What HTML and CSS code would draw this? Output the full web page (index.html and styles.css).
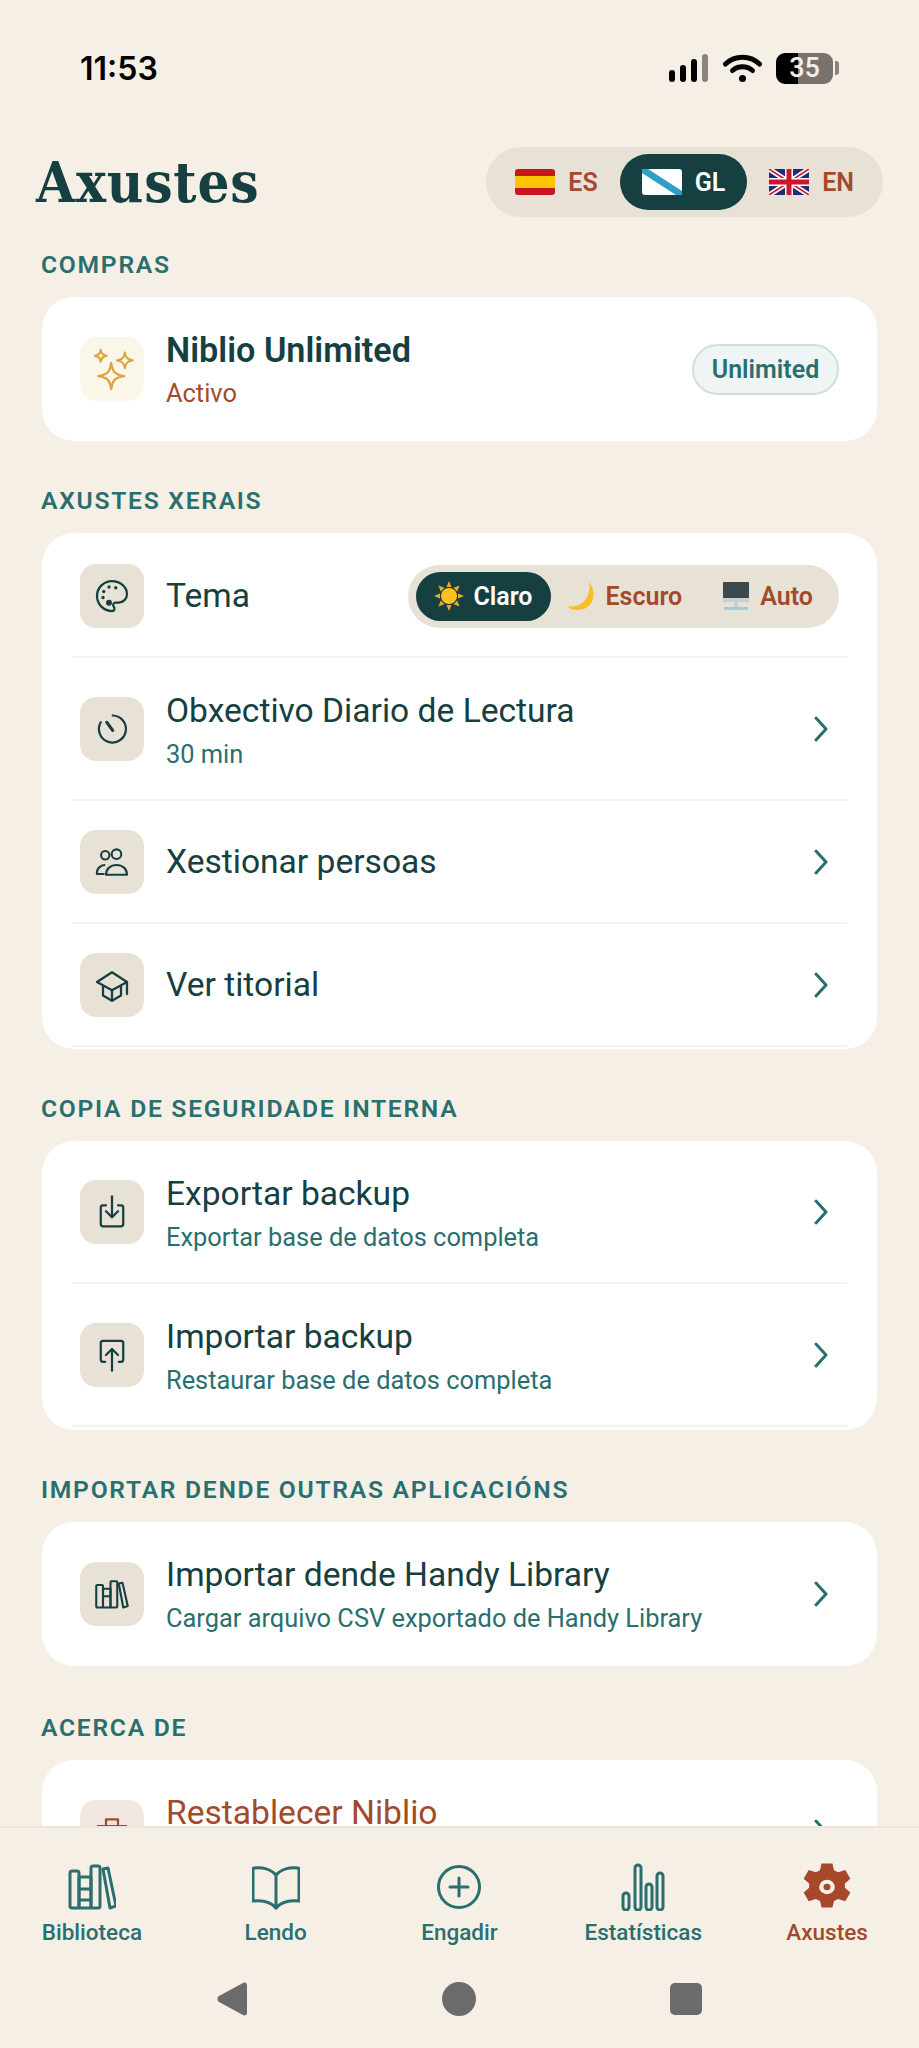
FILE: index.html
```html
<!DOCTYPE html>
<html lang="gl">
<head>
    <meta charset="UTF-8">
    <meta name="viewport" content="width=device-width, initial-scale=1.0">
    <title>Axustes</title>
    <link rel="stylesheet" href="styles.css">
</head>
<body>
<div class="page">

    <div class="status-bar">
        <span class="clock">11:53</span>
        <div class="status-icons">
            <svg class="signal" viewBox="0 0 39 28" width="39" height="28">
                <rect x="0" y="16" width="6" height="12" rx="3" fill="#000"/>
                <rect x="11" y="11" width="6" height="17" rx="3" fill="#000"/>
                <rect x="22" y="5" width="6" height="23" rx="3" fill="#000"/>
                <rect x="33" y="0" width="6" height="28" rx="3" fill="#8a857c"/>
            </svg>
            <svg class="wifi" viewBox="0 0 39 28" width="39" height="28" fill="none" stroke="#000" stroke-width="5" stroke-linecap="round">
                <path d="M2.500 10C12 1 27 1 36.500 10"/>
                <path d="M9.500 16.500C15 11.500 24 11.500 29.500 16.500"/>
                <circle cx="19.500" cy="24.500" r="3.500" fill="#000" stroke="none"/>
            </svg>
            <div class="battery"><span>35</span></div>
            <div class="battery-nub"></div>
        </div>
    </div>

    <main class="content">
        <header class="page-header">
            <h1>Axustes</h1>
            <div class="lang-switch">
                <div class="lang">
                    <svg class="flag" viewBox="0 0 40 26"><rect width="40" height="26" rx="3" fill="#c8161d"/><rect y="7" width="40" height="12" fill="#fbc400"/></svg>
                    <span>ES</span>
                </div>
                <div class="lang active">
                    <svg class="flag" viewBox="0 0 40 26"><rect width="40" height="26" rx="3" fill="#fff"/><path d="M0 0 L6 0 L40 22 L40 26 L34 26 L0 4 Z" fill="#2d9fc9"/></svg>
                    <span>GL</span>
                </div>
                <div class="lang">
                    <svg class="flag" viewBox="0 0 40 26">
                        <rect width="40" height="26" rx="3" fill="#1f2f75"/>
                        <path d="M0 0 L40 26 M40 0 L0 26" stroke="#fff" stroke-width="5"/>
                        <path d="M0 0 L40 26 M40 0 L0 26" stroke="#cf142b" stroke-width="1.600"/>
                        <path d="M20 0 V26 M0 13 H40" stroke="#fff" stroke-width="8"/>
                        <path d="M20 0 V26 M0 13 H40" stroke="#cf142b" stroke-width="5"/>
                    </svg>
                    <span>EN</span>
                </div>
            </div>
        </header>

        <h2 class="section-label">COMPRAS</h2>
        <section class="card">
            <div class="row row-tall no-line">
                <div class="tile tile-gold">
                    <svg class="tile-icon sparkles" viewBox="0 0 36 36" fill="none" stroke="#dba63f" stroke-width="1.700" stroke-linejoin="round">
                        <path d="M17 13 C18 20 20 22 27 23 C20 24 18 26 17 33 C16 26 14 24 7 23 C14 22 16 20 17 13 Z"/>
                        <path d="M27.500 5 C28 9 29.500 10.500 33.500 11 C29.500 11.500 28 13 27.500 17 C27 13 25.500 11.500 21.500 11 C25.500 10.500 27 9 27.500 5 Z"/>
                        <path d="M9 3 C9.400 6 10.500 7.100 13.500 7.500 C10.500 7.900 9.400 9 9 12 C8.600 9 7.500 7.900 4.500 7.500 C7.500 7.100 8.600 6 9 3 Z"/>
                    </svg>
                </div>
                <div class="row-text">
                    <div class="row-title strong">Niblio Unlimited</div>
                    <div class="row-sub rust">Activo</div>
                </div>
                <div class="badge">Unlimited</div>
            </div>
        </section>

        <h2 class="section-label">AXUSTES XERAIS</h2>
        <section class="card card-tail">
            <div class="row row-theme">
                <div class="tile">
                    <svg class="tile-icon" viewBox="0 0 24 24" fill="none" stroke="#163f41" stroke-width="1.500" stroke-linejoin="round">
                        <path d="M12 2C6.500 2 2 6.500 2 12s4.500 10 10 10c.926 0 1.648-.746 1.648-1.688 0-.437-.18-.835-.437-1.125-.29-.289-.438-.652-.438-1.125a1.640 1.640 0 0 1 1.668-1.668h1.996c3.051 0 5.555-2.503 5.555-5.554C21.965 6.012 17.461 2 12 2z"/>
                        <g fill="#163f41" stroke="none">
                            <circle cx="10" cy="6" r="1.100"/>
                            <circle cx="14.500" cy="6.500" r="1.100"/>
                            <circle cx="6.500" cy="9" r="1.100"/>
                            <circle cx="6" cy="13" r="1.100"/>
                            <circle cx="10" cy="16.500" r="2"/>
                        </g>
                    </svg>
                </div>
                <div class="row-text"><div class="row-title">Tema</div></div>
                <div class="theme-switch">
                    <div class="theme-opt active">
                        <svg class="emoji" viewBox="0 0 30 30">
                            <path d="M15 0l2.500 6h-5zM15 30l-2.500-6h5zM0 15l6-2.500v5zM30 15l-6 2.500v-5zM4.400 4.400l6 2.400-3.600 3.600zM25.600 25.600l-6-2.400 3.600-3.600zM25.600 4.400l-2.400 6-3.600-3.600zM4.400 25.600l2.400-6 3.600 3.600z" fill="#eda92b"/>
                            <circle cx="15" cy="15" r="8" fill="#fbbf1f"/>
                        </svg>
                        <span>Claro</span>
                    </div>
                    <div class="theme-opt">
                        <svg class="emoji" viewBox="0 0 30 30"><path d="M22 1 C30 10 28 29 10 29 C6 29 3 28 1 25 C14 28 25 16 22 1 Z" fill="#f6bf26"/></svg>
                        <span>Escuro</span>
                    </div>
                    <div class="theme-opt theme-opt-last">
                        <svg class="emoji" viewBox="0 0 30 30">
                            <rect x="2" y="1" width="26" height="19" fill="#3c4a4e"/>
                            <rect x="2" y="17" width="26" height="4" fill="#c9d2cf"/>
                            <rect x="13" y="21" width="4" height="6" fill="#b9d4dc"/>
                            <rect x="3" y="26" width="24" height="3" fill="#a4cbd8"/>
                        </svg>
                        <span>Auto</span>
                    </div>
                </div>
            </div>
            <div class="row row-tall">
                <div class="tile">
                    <svg class="tile-icon" viewBox="0 0 24 24" fill="none" stroke="#163f41" stroke-width="1.500" stroke-linecap="round">
                        <path d="M12.500 3a9 9 0 1 1-8 4.500"/>
                        <path d="M12.500 13 L8.500 7.500" stroke-width="2"/>
                    </svg>
                </div>
                <div class="row-text">
                    <div class="row-title">Obxectivo Diario de Lectura</div>
                    <div class="row-sub">30 min</div>
                </div>
                <svg class="chevron" viewBox="0 0 16 26"><path d="M3 2 L13 13 L3 24"/></svg>
            </div>
            <div class="row">
                <div class="tile">
                    <svg class="tile-icon" viewBox="0 0 24 24" fill="none" stroke="#163f41" stroke-width="1.400" stroke-linejoin="round">
                        <circle cx="7.500" cy="7.500" r="2.800"/>
                        <circle cx="15" cy="6.800" r="3.200"/>
                        <path d="M7 20H2c-.5-3 2-6 5.500-6"/>
                        <path d="M8 20.500c0-4 3-6.500 7-6.500s7 2.500 7 6.500z"/>
                    </svg>
                </div>
                <div class="row-text"><div class="row-title">Xestionar persoas</div></div>
                <svg class="chevron" viewBox="0 0 16 26"><path d="M3 2 L13 13 L3 24"/></svg>
            </div>
            <div class="row">
                <div class="tile">
                    <svg class="tile-icon" viewBox="0 0 24 24" fill="none" stroke="#163f41" stroke-width="1.500" stroke-linejoin="round" stroke-linecap="round">
                        <path d="M2 10 L12 3.500 L22 10 L12 15.500 Z"/>
                        <path d="M6 13v6l6 3.500 6-3.500v-6"/>
                        <path d="M12 15.500v7"/>
                        <path d="M22 10v8"/>
                    </svg>
                </div>
                <div class="row-text"><div class="row-title">Ver titorial</div></div>
                <svg class="chevron" viewBox="0 0 16 26"><path d="M3 2 L13 13 L3 24"/></svg>
            </div>
        </section>

        <h2 class="section-label">COPIA DE SEGURIDADE INTERNA</h2>
        <section class="card card-tail-long">
            <div class="row row-tall">
                <div class="tile">
                    <svg class="tile-icon" viewBox="0 0 24 24" fill="none" stroke="#163f41" stroke-width="1.500" stroke-linejoin="round" stroke-linecap="round">
                        <path d="M8 7.500H6a1.500 1.500 0 0 0-1.500 1.500v11A1.500 1.500 0 0 0 6 21.500h12a1.500 1.500 0 0 0 1.500-1.500V9A1.500 1.500 0 0 0 18 7.500h-2"/>
                        <path d="M12 1.500V15.500"/>
                        <path d="M8 11.500l4 4 4-4"/>
                    </svg>
                </div>
                <div class="row-text">
                    <div class="row-title">Exportar backup</div>
                    <div class="row-sub">Exportar base de datos completa</div>
                </div>
                <svg class="chevron" viewBox="0 0 16 26"><path d="M3 2 L13 13 L3 24"/></svg>
            </div>
            <div class="row row-tall">
                <div class="tile">
                    <svg class="tile-icon" viewBox="0 0 24 24" fill="none" stroke="#163f41" stroke-width="1.500" stroke-linejoin="round" stroke-linecap="round">
                        <path d="M7.500 16.500H6A1.500 1.500 0 0 1 4.500 15V4A1.500 1.500 0 0 1 6 2.500h12A1.500 1.500 0 0 1 19.500 4v11a1.500 1.500 0 0 1-1.500 1.500h-1.500"/>
                        <path d="M12 22.500V8"/>
                        <path d="M8 12l4-4 4 4"/>
                    </svg>
                </div>
                <div class="row-text">
                    <div class="row-title">Importar backup</div>
                    <div class="row-sub">Restaurar base de datos completa</div>
                </div>
                <svg class="chevron" viewBox="0 0 16 26"><path d="M3 2 L13 13 L3 24"/></svg>
            </div>
        </section>

        <h2 class="section-label">IMPORTAR DENDE OUTRAS APLICACIÓNS</h2>
        <section class="card">
            <div class="row row-tall no-line">
                <div class="tile">
                    <svg class="tile-icon" viewBox="0 0 24 24" fill="none" stroke="#163f41" stroke-width="1.400" stroke-linejoin="round">
                        <rect x="1.500" y="6" width="4.500" height="15" rx=".7"/>
                        <rect x="6" y="8.500" width="5" height="12.500"/>
                        <path d="M6 13.500h5"/>
                        <rect x="11" y="3.500" width="4.500" height="17.500" rx=".7"/>
                        <path d="M16.500 5 L19 4.500 L22.500 20 L19.500 21 Z"/>
                    </svg>
                </div>
                <div class="row-text">
                    <div class="row-title">Importar dende Handy Library</div>
                    <div class="row-sub">Cargar arquivo CSV exportado de Handy Library</div>
                </div>
                <svg class="chevron" viewBox="0 0 16 26"><path d="M3 2 L13 13 L3 24"/></svg>
            </div>
        </section>

        <h2 class="section-label section-label-low">ACERCA DE</h2>
        <section class="card">
            <div class="row row-tall no-line">
                <div class="tile tile-rust">
                    <svg class="tile-icon" viewBox="0 0 24 24" fill="none" stroke="#a34a2a" stroke-width="1.500" stroke-linejoin="round">
                        <path d="M2 8h20"/>
                        <path d="M8 8V3.500h8V8"/>
                        <path d="M4.500 8l1.500 14h12l1.500-14"/>
                    </svg>
                </div>
                <div class="row-text">
                    <div class="row-title rust">Restablecer Niblio</div>
                    <div class="row-sub">Borrar todos os datos</div>
                </div>
                <svg class="chevron" viewBox="0 0 16 26"><path d="M3 2 L13 13 L3 24"/></svg>
            </div>
        </section>
    </main>

    <nav class="bottom-nav">
        <div class="tabs">
            <div class="tab">
                <svg class="tab-icon" viewBox="0 0 48 48" fill="none" stroke="#2a6f6f" stroke-width="3" stroke-linejoin="round">
                    <rect x="2" y="8" width="9" height="37" rx="2"/>
                    <rect x="11" y="14" width="12" height="31"/>
                    <path d="M11 26h12M11 37h12"/>
                    <rect x="23" y="3" width="9" height="42" rx="2"/>
                    <path d="M35 6 L40 5 L48 43 L42 45 Z"/>
                </svg>
                <span>Biblioteca</span>
            </div>
            <div class="tab">
                <svg class="tab-icon" viewBox="0 0 48 48" fill="none" stroke="#2a6f6f" stroke-width="3" stroke-linejoin="round" stroke-linecap="round">
                    <path d="M24 12 C19 6 10 4 2 5 C1 5 1 6 1 7 V38 C10 37 19 39 24 45 C29 39 38 37 47 38 V7 C47 6 47 5 46 5 C38 4 29 6 24 12 Z"/>
                    <path d="M24 12V45"/>
                </svg>
                <span>Lendo</span>
            </div>
            <div class="tab">
                <svg class="tab-icon" viewBox="0 0 48 48" fill="none" stroke="#2a6f6f" stroke-width="3" stroke-linecap="round">
                    <circle cx="24" cy="24" r="20.500"/>
                    <path d="M24 15V33M15 24H33"/>
                </svg>
                <span>Engadir</span>
            </div>
            <div class="tab">
                <svg class="tab-icon" viewBox="0 0 48 48" fill="none" stroke="#2a6f6f" stroke-width="3">
                    <rect x="4" y="30" width="6" height="17" rx="3"/>
                    <rect x="16" y="2" width="6" height="45" rx="3"/>
                    <rect x="27" y="21" width="6" height="26" rx="3"/>
                    <rect x="38" y="10" width="6" height="37" rx="3"/>
                </svg>
                <span>Estatísticas</span>
            </div>
            <div class="tab active">
                <svg class="tab-icon" viewBox="1 0 22 24" preserveAspectRatio="none">
                    <path fill="#a8482a" fill-rule="evenodd" d="M9.500 0.300h5l.7 3.300 1.900 1 3.300-1.100 2.300 4.400-2.500 2.300v2.200l2.500 2.300-2.300 4.400-3.300-1.100-1.900 1-.7 3.300h-5l-.7-3.300-1.900-1-3.300 1.100-2.300-4.400 2.500-2.300v-2.200L1.300 7.900l2.300-4.400 3.300 1.100 1.900-1zM12 8.400a3.600 3.600 0 1 0 0 7.200 3.600 3.600 0 0 0 0-7.200zM12 10.400a1.600 1.600 0 1 1 0 3.200 1.600 1.600 0 0 1 0-3.200z"/>
                </svg>
                <span>Axustes</span>
            </div>
        </div>
        <div class="system-nav">
            <svg viewBox="0 0 30 34" width="30" height="34"><path d="M26 1 C28 0 30 1 30 3 V31 C30 33 28 34 26 33 L2 20 C0 19 0 15 2 14 Z" fill="#6b6b6b"/></svg>
            <div class="sys-circle"></div>
            <div class="sys-square"></div>
        </div>
    </nav>

</div>
</body>
</html>
```

FILE: styles.css
```css
/* Basic page */
body {
    margin: 0;
    font-family: Roboto, "Liberation Sans", sans-serif;
    background-color: #f5efe6;
    color: #163f41;
}
.page {
    position: relative;
    width: 919px;
    height: 2048px;
    overflow: hidden;
}

/* Status bar */
.status-bar {
    display: flex;
    justify-content: space-between;
    align-items: center;
    height: 62px;
    padding: 37px 80px 0 80px;
}
.clock {
    font-family: Inter, sans-serif;
    font-size: 32px;
    font-weight: 600;
    color: #000;
}
.status-icons {
    display: flex;
    align-items: center;
}
.status-icons .wifi {
    margin-left: 15px;
}
.battery {
    width: 57px;
    height: 31px;
    margin-left: 14px;
    border-radius: 9px;
    background: linear-gradient(to right, #000 38%, #77736c 38%);
    color: #f5efe6;
    font-size: 27px;
    font-weight: 500;
    line-height: 31px;
    text-align: center;
}
.battery-nub {
    width: 4px;
    height: 14px;
    margin-left: 2px;
    border-radius: 0 3px 3px 0;
    background-color: #8a857c;
}

/* Header */
.content {
    padding: 0 42px;
}
.page-header {
    display: flex;
    justify-content: space-between;
    align-items: center;
    height: 70px;
    margin-top: 48px;
}
h1 {
    margin: 0 0 0 -6px;
    font-family: "DejaVu Serif Condensed", "DejaVu Serif", serif;
    font-size: 56px;
    font-stretch: condensed;
    font-weight: 700;
    letter-spacing: 0.8px;
    color: #163f41;
}
.lang-switch {
    display: flex;
    padding: 7px;
    margin-right: -6px;
    border-radius: 35px;
    background-color: #e8e2d6;
}
.lang {
    display: flex;
    align-items: center;
    gap: 13px;
    height: 56px;
    padding: 0 22px;
    border-radius: 28px;
    font-size: 25px;
    font-weight: 600;
    color: #a34a2a;
}
.lang.active {
    background-color: #163f41;
    color: #fff;
}
.flag {
    width: 40px;
    height: 26px;
}

/* Sections */
.section-label {
    margin: 45px 0 18px -1px;
    font-size: 24.700px;
    font-weight: 600;
    line-height: 29px;
    letter-spacing: 1.700px;
    color: #2a6f6f;
}
.page-header + .section-label {
    margin-top: 33px;
}
.section-label-low {
    margin-top: 47px;
}
.card {
    overflow: hidden;
    padding: 0 30px;
    border-radius: 32px;
    background-color: #fff;
}
.card-tail {
    padding-bottom: 2px;
}
.card-tail-long {
    padding-bottom: 3px;
}
.row {
    display: flex;
    align-items: center;
    box-sizing: border-box;
    height: 123px;
    padding: 0 8px;
    border-bottom: 2px solid #f7f3ec;
}
.row-tall {
    height: 143px;
}
.row-tall .row-text {
    padding-top: 3px;
}
.row-theme {
    height: 125px;
    padding-top: 3px;
}
.no-line {
    border-bottom: none;
    height: 144px;
}
.no-line .row-text {
    padding-top: 0;
}
.tile {
    display: flex;
    flex-shrink: 0;
    align-items: center;
    justify-content: center;
    width: 64px;
    height: 64px;
    margin-right: 22px;
    border-radius: 16px;
    background-color: #e8e2d6;
}
.tile-gold {
    background-color: #fbf6ea;
}
.tile-rust {
    background-color: #f2e7e0;
}
.tile-icon {
    width: 36px;
    height: 36px;
}
.tile-icon.sparkles {
    width: 47px;
    height: 47px;
}
.row-text {
    flex: 1;
}
.row-title {
    font-size: 33.600px;
    line-height: 40px;
    color: #163f41;
}
.row-title.strong {
    font-size: 34.200px;
    font-weight: 600;
}
.row-sub {
    margin-top: 8px;
    font-size: 25.400px;
    line-height: 30px;
    color: #2a6f6f;
}
.rust {
    color: #a34a2a;
}
.row-title.rust {
    color: #a34a2a;
}
.badge {
    box-sizing: border-box;
    width: 147px;
    height: 51px;
    border: 2px solid #cfe0dd;
    border-radius: 26px;
    background-color: #eef5f4;
    color: #2a6f6f;
    font-size: 25px;
    font-weight: 600;
    line-height: 47px;
    text-align: center;
}
.chevron {
    width: 16px;
    height: 26px;
    margin-right: 10px;
    fill: none;
    stroke: #2a6f6f;
    stroke-width: 3;
    stroke-linecap: round;
    stroke-linejoin: round;
}

/* Theme switch */
.theme-switch {
    display: flex;
    box-sizing: border-box;
    height: 63px;
    padding: 7px 0 7px 8px;
    border-radius: 32px;
    background-color: #e8e2d6;
}
.theme-opt {
    display: flex;
    align-items: center;
    gap: 9px;
    height: 49px;
    padding: 0 23px 0 16px;
    border-radius: 25px;
    font-size: 25px;
    font-weight: 600;
    color: #a34a2a;
}
.theme-opt.active {
    padding: 0 18px;
    background-color: #163f41;
    color: #fff;
}
.theme-opt-last {
    padding-right: 26px;
}
.emoji {
    width: 30px;
    height: 30px;
}

.bottom-nav {
    position: absolute;
    left: 0;
    right: 0;
    bottom: 0;
    box-sizing: border-box;
    height: 222px;
    border-top: 2px solid #ece6da;
    background-color: #f5efe6;
}
.tabs {
    display: flex;
    padding-top: 35px;
}
.tab {
    display: flex;
    flex: 1;
    flex-direction: column;
    align-items: center;
    font-size: 22.500px;
    font-weight: 500;
    color: #2a6f6f;
}
.tab.active {
    color: #a34a2a;
}
.tab-icon {
    width: 48px;
    height: 48px;
    margin-bottom: 8px;
}
.system-nav {
    display: flex;
    align-items: center;
    justify-content: space-between;
    width: 485px;
    margin: 37px 0 0 217px;
}
.sys-circle {
    width: 34px;
    height: 34px;
    border-radius: 50%;
    background-color: #6b6b6b;
}
.sys-square {
    width: 32px;
    height: 32px;
    border-radius: 5px;
    background-color: #6b6b6b;
}
```
